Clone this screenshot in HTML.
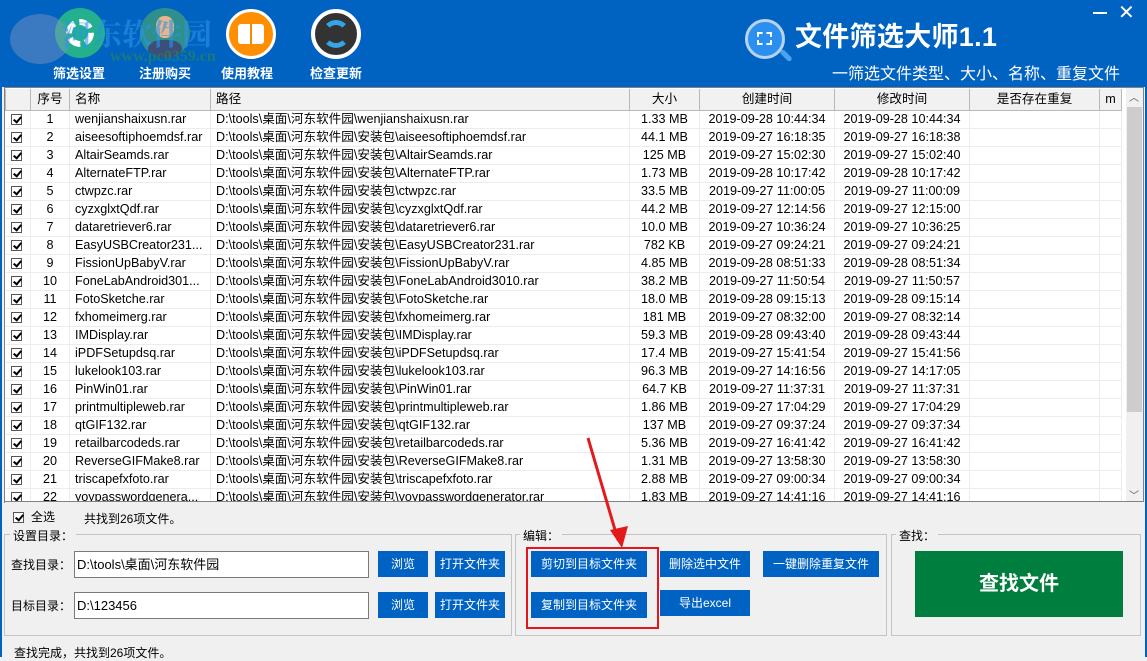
<!DOCTYPE html>
<html><head><meta charset="utf-8"><style>
*{margin:0;padding:0;box-sizing:border-box}
body{width:1147px;height:657px;overflow:hidden;background:#f0f0f0;font-family:"Liberation Sans","Noto Sans CJK SC",sans-serif;font-size:12px;color:#000;position:relative}
.a{position:absolute}
.top{left:0;top:0;width:1147px;height:87px;background:#0062c1}
.tb{color:#fff;font-size:13px;font-weight:bold;text-align:center;width:80px}
.ic{border-radius:50%}
table{border-collapse:collapse;table-layout:fixed;position:absolute;left:5px;top:89px;width:1116px;background:#fff;font-size:12.6px}
td,th{height:18px;white-space:nowrap;overflow:hidden;border-right:1px solid #ececec;border-bottom:1px solid #ececec;padding:0 5px;font-weight:normal;line-height:17px}
th{height:21px;background:#f1f1f1;border:1px solid #b9b9b9;border-top:0;font-size:12.6px}
td.c{text-align:center}
.cb{display:inline-block;width:11px;height:11px;border:1px solid #555;background:#fff;position:relative;vertical-align:middle}
.cb:after{content:"";position:absolute;left:3px;top:0px;width:3px;height:6px;border:solid #000;border-width:0 2px 2px 0;transform:rotate(40deg)}
.btn{background:#0063c3;color:#fff;text-align:center;font-size:12px;line-height:26px;height:26px}
.inp{background:#fff;border:1px solid #7a7a7a;height:27px;line-height:25px;padding-left:2px;font-size:13px}
.gb{border:1px solid #c4c4c4}
.gl{background:#f0f0f0;padding:0 3px;font-size:12px}
</style></head><body>
<div class="a top"></div>
<div class="a ic" style="left:55px;top:8px;width:50px;height:50px;background:#24b08c"></div>
<div class="a" style="left:66px;top:19px;width:28px;height:28px;border:6px dashed #fff;border-radius:50%"></div>
<div class="a ic" style="left:140px;top:8px;width:50px;height:50px;background:#2e8f8c;overflow:hidden"><div class="a" style="left:16px;top:8px;width:18px;height:22px;background:#e9b58f;border-radius:45%"></div><div class="a" style="left:8px;top:32px;width:34px;height:22px;background:#3b4f7a;border-radius:40% 40% 0 0"></div></div>
<div class="a ic" style="left:226px;top:9px;width:50px;height:50px;background:#ff8f00;border:3px solid #fff"></div>
<div class="a" style="left:238px;top:24px;width:26px;height:20px;background:#fff;border-radius:3px"></div>
<div class="a" style="left:250px;top:24px;width:2px;height:20px;background:#f58a00"></div>
<div class="a ic" style="left:311px;top:9px;width:50px;height:50px;background:#333;border:4px solid #fff"></div>
<div class="a ic" style="left:322px;top:20px;width:28px;height:28px;border:5px solid #35a4e8;border-left-color:transparent;border-right-color:transparent"></div>
<div class="a" style="left:10px;top:14px;width:60px;height:50px;border-radius:50%;background:rgba(130,150,190,.45)"></div>
<div class="a" style="left:62px;top:10px;color:rgba(40,150,230,.6);font-size:30px;font-weight:bold;font-family:'Noto Serif CJK SC',serif">河东软件园</div>
<div class="a" style="left:110px;top:48px;color:rgba(40,140,80,.6);font-size:16px;font-weight:bold;font-family:'Liberation Serif',serif">www.pc0359.cn</div>
<div class="a tb" style="left:39px;top:63px">筛选设置</div>
<div class="a tb" style="left:125px;top:63px">注册购买</div>
<div class="a tb" style="left:207px;top:63px">使用教程</div>
<div class="a tb" style="left:296px;top:63px">检查更新</div>
<div class="a ic" style="left:745px;top:19px;width:40px;height:40px;background:#2b8ff0;border:3px solid #b7d3ee"></div>
<div class="a" style="left:779px;top:53px;width:14px;height:5px;background:#4aa3f0;transform:rotate(45deg);border-radius:3px"></div>
<div class="a" style="left:757px;top:32px;width:15px;height:13px;border:2px dashed #fff"></div>
<div class="a" style="left:795px;top:15px;color:#fff;font-size:27px;font-weight:bold;letter-spacing:0.3px">文件筛选大师1.1</div>
<div class="a" style="left:832px;top:60px;color:#fff;font-size:16px">一筛选文件类型、大小、名称、重复文件</div>
<div class="a" style="left:1093px;top:12px;width:14px;height:2px;background:#fff"></div>
<div class="a" style="left:1118px;top:0px;color:#fff;font-size:20px">✕</div>
<div class="a" style="left:4px;top:87px;width:1140px;height:416px;border:1px solid #828282;background:#fff"></div>
<table>
<colgroup><col style="width:25px"><col style="width:39px"><col style="width:141px"><col style="width:419px"><col style="width:70px"><col style="width:135px"><col style="width:135px"><col style="width:130px"><col style="width:22px"></colgroup>
<tr><th></th><th>序号</th><th style="text-align:left">名称</th><th style="text-align:left">路径</th><th>大小</th><th>创建时间</th><th>修改时间</th><th>是否存在重复</th><th style="padding:0 2px">m</th></tr>
<tr><td><span class="cb"></span></td><td class="c">1</td><td>wenjianshaixusn.rar</td><td>D:\tools\桌面\河东软件园\wenjianshaixusn.rar</td><td class="c">1.33 MB</td><td class="c">2019-09-28 10:44:34</td><td class="c">2019-09-28 10:44:34</td><td></td><td></td></tr>
<tr><td><span class="cb"></span></td><td class="c">2</td><td>aiseesoftiphoemdsf.rar</td><td>D:\tools\桌面\河东软件园\安装包\aiseesoftiphoemdsf.rar</td><td class="c">44.1 MB</td><td class="c">2019-09-27 16:18:35</td><td class="c">2019-09-27 16:18:38</td><td></td><td></td></tr>
<tr><td><span class="cb"></span></td><td class="c">3</td><td>AltairSeamds.rar</td><td>D:\tools\桌面\河东软件园\安装包\AltairSeamds.rar</td><td class="c">125 MB</td><td class="c">2019-09-27 15:02:30</td><td class="c">2019-09-27 15:02:40</td><td></td><td></td></tr>
<tr><td><span class="cb"></span></td><td class="c">4</td><td>AlternateFTP.rar</td><td>D:\tools\桌面\河东软件园\安装包\AlternateFTP.rar</td><td class="c">1.73 MB</td><td class="c">2019-09-28 10:17:42</td><td class="c">2019-09-28 10:17:42</td><td></td><td></td></tr>
<tr><td><span class="cb"></span></td><td class="c">5</td><td>ctwpzc.rar</td><td>D:\tools\桌面\河东软件园\安装包\ctwpzc.rar</td><td class="c">33.5 MB</td><td class="c">2019-09-27 11:00:05</td><td class="c">2019-09-27 11:00:09</td><td></td><td></td></tr>
<tr><td><span class="cb"></span></td><td class="c">6</td><td>cyzxglxtQdf.rar</td><td>D:\tools\桌面\河东软件园\安装包\cyzxglxtQdf.rar</td><td class="c">44.2 MB</td><td class="c">2019-09-27 12:14:56</td><td class="c">2019-09-27 12:15:00</td><td></td><td></td></tr>
<tr><td><span class="cb"></span></td><td class="c">7</td><td>dataretriever6.rar</td><td>D:\tools\桌面\河东软件园\安装包\dataretriever6.rar</td><td class="c">10.0 MB</td><td class="c">2019-09-27 10:36:24</td><td class="c">2019-09-27 10:36:25</td><td></td><td></td></tr>
<tr><td><span class="cb"></span></td><td class="c">8</td><td>EasyUSBCreator231...</td><td>D:\tools\桌面\河东软件园\安装包\EasyUSBCreator231.rar</td><td class="c">782 KB</td><td class="c">2019-09-27 09:24:21</td><td class="c">2019-09-27 09:24:21</td><td></td><td></td></tr>
<tr><td><span class="cb"></span></td><td class="c">9</td><td>FissionUpBabyV.rar</td><td>D:\tools\桌面\河东软件园\安装包\FissionUpBabyV.rar</td><td class="c">4.85 MB</td><td class="c">2019-09-28 08:51:33</td><td class="c">2019-09-28 08:51:34</td><td></td><td></td></tr>
<tr><td><span class="cb"></span></td><td class="c">10</td><td>FoneLabAndroid301...</td><td>D:\tools\桌面\河东软件园\安装包\FoneLabAndroid3010.rar</td><td class="c">38.2 MB</td><td class="c">2019-09-27 11:50:54</td><td class="c">2019-09-27 11:50:57</td><td></td><td></td></tr>
<tr><td><span class="cb"></span></td><td class="c">11</td><td>FotoSketche.rar</td><td>D:\tools\桌面\河东软件园\安装包\FotoSketche.rar</td><td class="c">18.0 MB</td><td class="c">2019-09-28 09:15:13</td><td class="c">2019-09-28 09:15:14</td><td></td><td></td></tr>
<tr><td><span class="cb"></span></td><td class="c">12</td><td>fxhomeimerg.rar</td><td>D:\tools\桌面\河东软件园\安装包\fxhomeimerg.rar</td><td class="c">181 MB</td><td class="c">2019-09-27 08:32:00</td><td class="c">2019-09-27 08:32:14</td><td></td><td></td></tr>
<tr><td><span class="cb"></span></td><td class="c">13</td><td>IMDisplay.rar</td><td>D:\tools\桌面\河东软件园\安装包\IMDisplay.rar</td><td class="c">59.3 MB</td><td class="c">2019-09-28 09:43:40</td><td class="c">2019-09-28 09:43:44</td><td></td><td></td></tr>
<tr><td><span class="cb"></span></td><td class="c">14</td><td>iPDFSetupdsq.rar</td><td>D:\tools\桌面\河东软件园\安装包\iPDFSetupdsq.rar</td><td class="c">17.4 MB</td><td class="c">2019-09-27 15:41:54</td><td class="c">2019-09-27 15:41:56</td><td></td><td></td></tr>
<tr><td><span class="cb"></span></td><td class="c">15</td><td>lukelook103.rar</td><td>D:\tools\桌面\河东软件园\安装包\lukelook103.rar</td><td class="c">96.3 MB</td><td class="c">2019-09-27 14:16:56</td><td class="c">2019-09-27 14:17:05</td><td></td><td></td></tr>
<tr><td><span class="cb"></span></td><td class="c">16</td><td>PinWin01.rar</td><td>D:\tools\桌面\河东软件园\安装包\PinWin01.rar</td><td class="c">64.7 KB</td><td class="c">2019-09-27 11:37:31</td><td class="c">2019-09-27 11:37:31</td><td></td><td></td></tr>
<tr><td><span class="cb"></span></td><td class="c">17</td><td>printmultipleweb.rar</td><td>D:\tools\桌面\河东软件园\安装包\printmultipleweb.rar</td><td class="c">1.86 MB</td><td class="c">2019-09-27 17:04:29</td><td class="c">2019-09-27 17:04:29</td><td></td><td></td></tr>
<tr><td><span class="cb"></span></td><td class="c">18</td><td>qtGIF132.rar</td><td>D:\tools\桌面\河东软件园\安装包\qtGIF132.rar</td><td class="c">137 MB</td><td class="c">2019-09-27 09:37:24</td><td class="c">2019-09-27 09:37:34</td><td></td><td></td></tr>
<tr><td><span class="cb"></span></td><td class="c">19</td><td>retailbarcodeds.rar</td><td>D:\tools\桌面\河东软件园\安装包\retailbarcodeds.rar</td><td class="c">5.36 MB</td><td class="c">2019-09-27 16:41:42</td><td class="c">2019-09-27 16:41:42</td><td></td><td></td></tr>
<tr><td><span class="cb"></span></td><td class="c">20</td><td>ReverseGIFMake8.rar</td><td>D:\tools\桌面\河东软件园\安装包\ReverseGIFMake8.rar</td><td class="c">1.31 MB</td><td class="c">2019-09-27 13:58:30</td><td class="c">2019-09-27 13:58:30</td><td></td><td></td></tr>
<tr><td><span class="cb"></span></td><td class="c">21</td><td>triscapefxfoto.rar</td><td>D:\tools\桌面\河东软件园\安装包\triscapefxfoto.rar</td><td class="c">2.88 MB</td><td class="c">2019-09-27 09:00:34</td><td class="c">2019-09-27 09:00:34</td><td></td><td></td></tr>
<tr><td><span class="cb"></span></td><td class="c">22</td><td>yoypasswordgenera...</td><td>D:\tools\桌面\河东软件园\安装包\yoypasswordgenerator.rar</td><td class="c">1.83 MB</td><td class="c">2019-09-27 14:41:16</td><td class="c">2019-09-27 14:41:16</td><td></td><td></td></tr>
</table>
<div class="a" style="left:5px;top:502px;width:1140px;height:12px;background:#f0f0f0"></div>
<div class="a" style="left:4px;top:501px;width:1140px;height:1px;background:#828282"></div>
<div class="a" style="left:1126px;top:88px;width:17px;height:413px;background:#f0f0f0"></div>
<div class="a" style="left:1127px;top:107px;width:15px;height:305px;background:#cdcdcd"></div>
<div class="a" style="left:1129px;top:89px;font-size:10px;color:#555">︿</div>
<div class="a" style="left:1129px;top:487px;font-size:10px;color:#555">﹀</div>
<div class="a" style="left:13px;top:510px"><span class="cb"></span></div>
<div class="a" style="left:31px;top:508px;font-size:12px">全选</div>
<div class="a" style="left:84px;top:510px;font-size:12px">共找到26项文件。</div>
<div class="a gb" style="left:4px;top:534px;width:508px;height:102px"></div>
<div class="a gl" style="left:10px;top:527px">设置目录：</div>
<div class="a" style="left:11px;top:556px;font-size:12px">查找目录：</div>
<div class="a inp" style="left:74px;top:551px;width:295px">D:\tools\桌面\河东软件园</div>
<div class="a btn" style="left:378px;top:551px;width:50px">浏览</div>
<div class="a btn" style="left:435px;top:551px;width:70px">打开文件夹</div>
<div class="a" style="left:11px;top:597px;font-size:12px">目标目录：</div>
<div class="a inp" style="left:74px;top:592px;width:295px">D:\123456</div>
<div class="a btn" style="left:378px;top:592px;width:50px">浏览</div>
<div class="a btn" style="left:435px;top:592px;width:70px">打开文件夹</div>
<div class="a gb" style="left:515px;top:534px;width:372px;height:102px"></div>
<div class="a gl" style="left:520px;top:527px">编辑：</div>
<div class="a btn" style="left:531px;top:551px;width:116px">剪切到目标文件夹</div>
<div class="a btn" style="left:660px;top:551px;width:90px">删除选中文件</div>
<div class="a btn" style="left:763px;top:551px;width:116px">一键删除重复文件</div>
<div class="a btn" style="left:531px;top:592px;width:116px">复制到目标文件夹</div>
<div class="a btn" style="left:660px;top:590px;width:90px">导出excel</div>
<div class="a" style="left:526px;top:547px;width:133px;height:82px;border:2px solid #e8141c"></div>
<div class="a gb" style="left:891px;top:534px;width:250px;height:102px"></div>
<div class="a gl" style="left:896px;top:527px">查找：</div>
<div class="a" style="left:915px;top:551px;width:208px;height:66px;background:#007e3d;color:#fff;font-size:20px;font-weight:bold;text-align:center;line-height:66px">查找文件</div>
<div class="a" style="left:0;top:641px;width:1147px;height:16px;background:#f0f0f0"></div>
<div class="a" style="left:14px;top:644px;font-size:12px">查找完成，共找到26项文件。</div>
<svg class="a" style="left:580px;top:430px" width="60" height="125"><line x1="8" y1="8" x2="38" y2="110" stroke="#e31a1c" stroke-width="3"/><polygon points="30,100 48,96 42,118" fill="#e31a1c"/></svg>
<div class="a" style="left:0;top:0;width:2px;height:657px;background:#0062c1"></div>
<div class="a" style="left:1145px;top:0;width:2px;height:657px;background:#0062c1"></div>
</body></html>
